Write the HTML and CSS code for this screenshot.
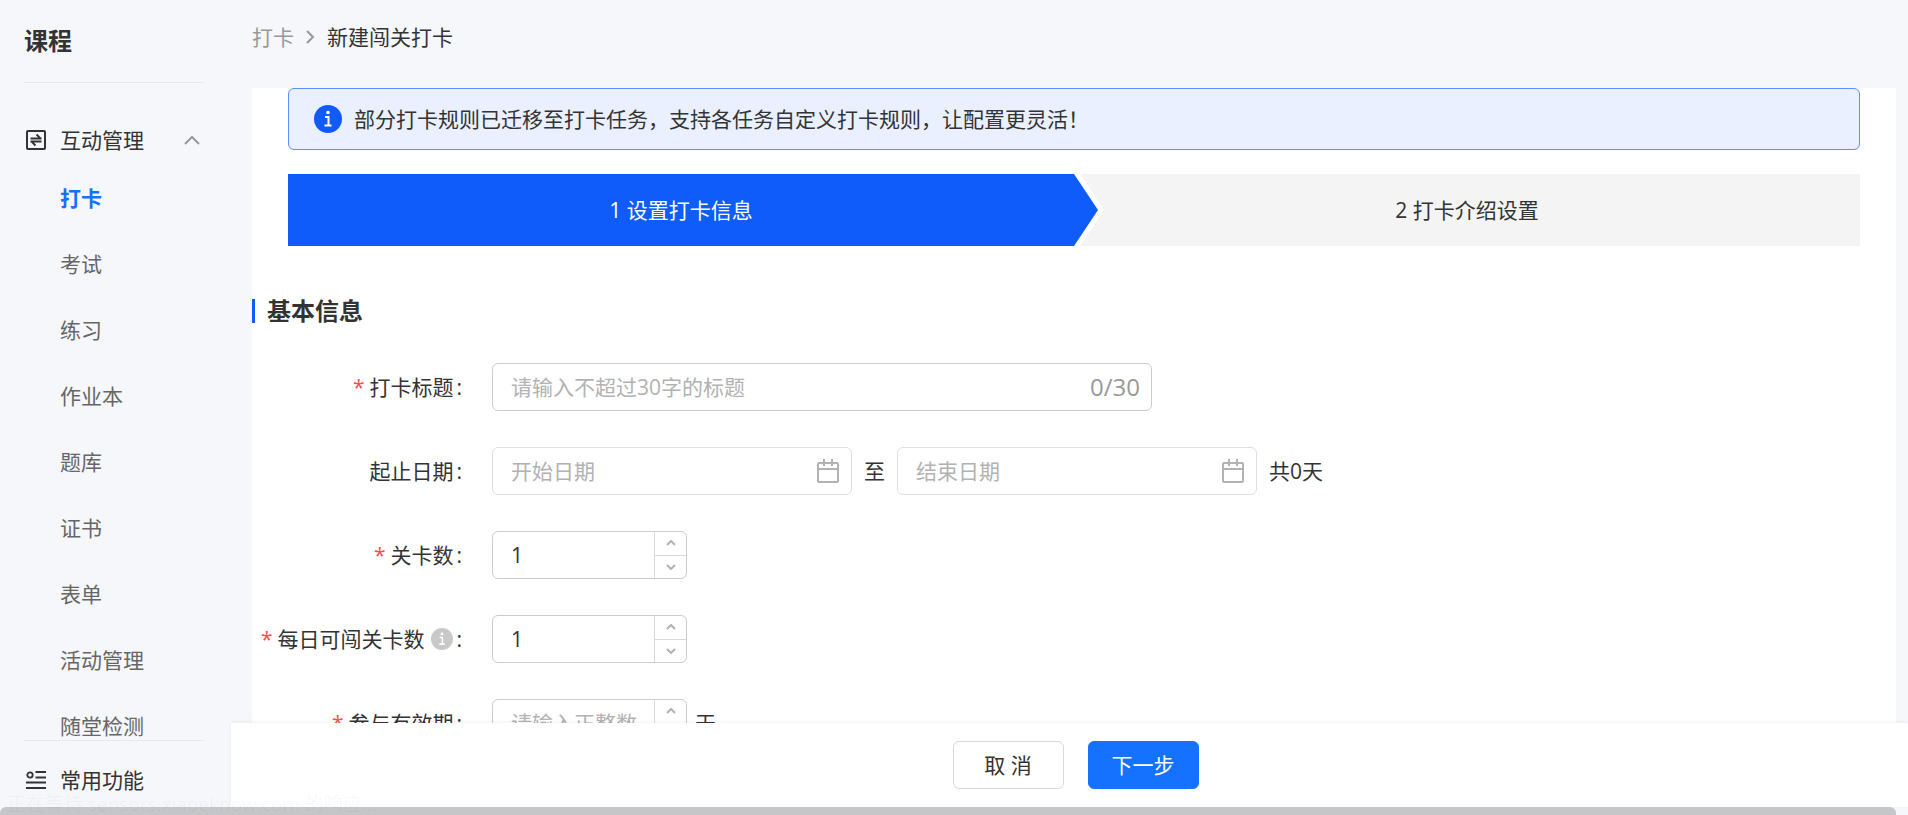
FILE: index.html
```html
<!DOCTYPE html>
<html lang="zh-CN">

<head>
  <meta charset="utf-8">
  <meta name="viewport" content="width=device-width, initial-scale=1">
  <title>新建闯关打卡</title>
  <link rel="stylesheet" href="styles.css">
</head>

<body>
  <div class="app">
    <aside class="sidebar">
      <h1 class="sidebar-title">课程</h1>
      <nav class="menu">
        <button class="menu-group" type="button">
          <svg class="menu-icon" viewBox="0 0 20 20" fill="none" stroke="currentColor" stroke-width="2">
            <rect x="1" y="1" width="18" height="18" rx="1" />
            <path d="M4.5 8.5h11M10.5 4.5l4 4M15.5 11.5h-11M9.5 15.5l-4-4" stroke-width="1.8" />
          </svg>
          <span>互动管理</span>
          <svg class="menu-arrow" viewBox="0 0 16 10" fill="none" stroke="currentColor" stroke-width="2">
            <path d="M1 9l7-7 7 7" />
          </svg>
        </button>
        <a class="menu-item active" href="#">打卡</a>
        <a class="menu-item" href="#">考试</a>
        <a class="menu-item" href="#">练习</a>
        <a class="menu-item" href="#">作业本</a>
        <a class="menu-item" href="#">题库</a>
        <a class="menu-item" href="#">证书</a>
        <a class="menu-item" href="#">表单</a>
        <a class="menu-item" href="#">活动管理</a>
        <a class="menu-item" href="#">随堂检测</a>
      </nav>
      <a class="common" href="#">
        <svg class="menu-icon" viewBox="0 0 20 20" fill="none" stroke="currentColor" stroke-width="2">
          <circle cx="4" cy="5" r="2.7" stroke-width="1.8" />
          <path d="M9.5 2H20M9.5 7.5H20M0 12.5h20M0 18h20" />
        </svg>
        <span>常用功能</span>
      </a>
    </aside>

    <main class="main">
      <div class="content">
        <div class="breadcrumb">
          <a href="#">打卡</a>
          <svg class="crumb-arrow" viewBox="0 0 9 14" fill="none" stroke="currentColor" stroke-width="2">
            <path d="M1 1l6 6-6 6" />
          </svg>
          <span>新建闯关打卡</span>
        </div>

        <div class="panel">
          <div class="notice">
            <svg class="notice-icon" viewBox="0 0 28 28">
              <circle cx="14" cy="14" r="14" fill="#105cfb" />
              <circle cx="14" cy="7.5" r="1.8" fill="#fff" />
              <path d="M11 12h3.5v8M10.5 20.5h7" fill="none" stroke="#fff" stroke-width="2" />
            </svg>
            <span>部分打卡规则已迁移至打卡任务，支持各任务自定义打卡规则，让配置更灵活！</span>
          </div>

          <div class="steps">
            <div class="step current">1 设置打卡信息</div>
            <div class="step">2 打卡介绍设置</div>
          </div>

          <h2 class="section-title">基本信息</h2>

          <form class="form" id="form">
            <div class="row">
              <label class="label required" for="title">打卡标题<i>:</i></label>
              <div class="box title-box">
                <input type="text" id="title" placeholder="请输入不超过30字的标题">
                <span class="count">0/30</span>
              </div>
            </div>
            <div class="row">
              <label class="label" for="start">起止日期<i>:</i></label>
              <div class="box date-box">
                <input type="text" id="start" placeholder="开始日期">
                <svg class="calendar" viewBox="0 0 22 24" fill="none" stroke="currentColor" stroke-width="2">
                  <rect x="1" y="4" width="20" height="19" rx="1" />
                  <path d="M1 10h20M7 0v7M15 0v7" />
                </svg>
              </div>
              <label for="end">至</label>
              <div class="box date-box">
                <input type="text" id="end" placeholder="结束日期">
                <svg class="calendar" viewBox="0 0 22 24" fill="none" stroke="currentColor" stroke-width="2">
                  <rect x="1" y="4" width="20" height="19" rx="1" />
                  <path d="M1 10h20M7 0v7M15 0v7" />
                </svg>
              </div>
              <span>共0天</span>
            </div>
            <div class="row">
              <label class="label required" for="levels">关卡数<i>:</i></label>
              <div class="box number-box">
                <input type="number" id="levels" value="1">
                <div class="stepper">
                  <button type="button" aria-label="增加"><svg viewBox="0 0 10 6"><path d="M1 5l4-4 4 4" /></svg></button>
                  <button type="button" aria-label="减少"><svg viewBox="0 0 10 6"><path d="M1 1l4 4 4-4" /></svg></button>
                </div>
              </div>
            </div>
            <div class="row">
              <label class="label required" for="daily">每日可闯关卡数
                <svg class="help" viewBox="0 0 28 28">
                  <circle cx="14" cy="14" r="14" fill="#c8c8c8" />
                  <circle cx="14" cy="7.5" r="1.8" fill="#fff" />
                  <path d="M11 12h3.5v8M10.5 20.5h7" fill="none" stroke="#fff" stroke-width="2" />
                </svg><i>:</i></label>
              <div class="box number-box">
                <input type="number" id="daily" value="1">
                <div class="stepper">
                  <button type="button" aria-label="增加"><svg viewBox="0 0 10 6"><path d="M1 5l4-4 4 4" /></svg></button>
                  <button type="button" aria-label="减少"><svg viewBox="0 0 10 6"><path d="M1 1l4 4 4-4" /></svg></button>
                </div>
              </div>
            </div>
            <div class="row">
              <label class="label required" for="valid">参与有效期<i>:</i></label>
              <div class="box number-box">
                <input type="number" id="valid" placeholder="请输入正整数">
                <div class="stepper">
                  <button type="button" aria-label="增加"><svg viewBox="0 0 10 6"><path d="M1 5l4-4 4 4" /></svg></button>
                  <button type="button" aria-label="减少"><svg viewBox="0 0 10 6"><path d="M1 1l4 4 4-4" /></svg></button>
                </div>
              </div>
              <span>天</span>
            </div>
          </form>
        </div>
      </div>

      <div class="actions">
        <button class="btn" type="button">取 消</button>
        <button class="btn btn-primary" type="submit" form="form">下一步</button>
      </div>
    </main>
  </div>
  <div class="scrollbar"></div>
  <div class="status">正在等待 sensors.xiaoeknow.com 的响应...</div>
</body>

</html>
```

FILE: styles.css
```css
* {
  box-sizing: border-box;
}

body {
  margin: 0;
  height: 100vh;
  display: flex;
  flex-direction: column;
  background: #f5f7fb;
  color: #333;
  font-family: "Open Sans", "Noto Sans CJK SC", sans-serif;
  font-size: 21px;
  line-height: 32px;
  overflow: hidden;
}

a {
  color: inherit;
  text-decoration: none;
}

button,
input {
  font: inherit;
  color: inherit;
}

svg {
  display: block;
  flex: none;
}

.app {
  flex: 1;
  min-height: 0;
  display: flex;
}

/* sidebar */
.sidebar {
  flex: none;
  width: 231px;
  padding: 0 27px 0 24px;
  display: flex;
  flex-direction: column;
}

.sidebar-title {
  margin: 0;
  height: 83px;
  flex: none;
  border-bottom: 1px solid #e9e9eb;
  font-size: 24px;
  line-height: 82px;
}

.menu {
  flex: 1;
  min-height: 0;
  padding-top: 32px;
  overflow-y: auto;
  scrollbar-width: none;
}

.menu-group {
  width: 100%;
  height: 50px;
  padding: 0 4px 0 2px;
  border: none;
  background: none;
  display: flex;
  align-items: center;
  gap: 14px;
  cursor: pointer;
}

.menu-icon {
  width: 20px;
  height: 20px;
}

.menu-arrow {
  width: 16px;
  height: 10px;
  margin-left: auto;
  color: #999;
}

.menu-item {
  display: block;
  padding-left: 36px;
  line-height: 66px;
  color: #666;
}

.menu-item.active {
  color: #1472ff;
  font-weight: bold;
}

.common {
  flex: none;
  height: 67px;
  padding: 12px 2px 0;
  border-top: 1px solid #e9e9eb;
  display: flex;
  align-items: center;
  gap: 14px;
}

/* main area */
.main {
  flex: 1;
  min-width: 0;
  display: flex;
  flex-direction: column;
}

.content {
  flex: 1;
  min-height: 0;
  padding: 0 12px 0 21px;
  overflow-y: auto;
  scrollbar-width: none;
}

.breadcrumb {
  height: 88px;
  padding-bottom: 14px;
  display: flex;
  align-items: center;
  gap: 12px;
}

.breadcrumb a,
.crumb-arrow {
  color: #999;
}

.crumb-arrow {
  width: 9px;
  height: 14px;
}

.panel {
  background: #fff;
  padding-bottom: 36px;
}

.notice {
  margin: 0 36px 24px;
  height: 62px;
  padding: 0 25px;
  border: 1px solid #5b8ffc;
  border-radius: 6px;
  background: #eaf0ff;
  display: flex;
  align-items: center;
  gap: 12px;
}

.notice-icon {
  width: 28px;
  height: 28px;
}

.steps {
  margin: 0 36px;
  display: flex;
  background: #f4f4f4;
}

.step {
  flex: 1;
  height: 72px;
  line-height: 72px;
  text-align: center;
}

.step.current {
  position: relative;
  background: #105cfb;
  color: #fff;
}

/* white edge and blue tip of the arrow, over the next step */
.step.current::before,
.step.current::after {
  content: "";
  position: absolute;
  top: 0;
  left: 100%;
  width: 30px;
  height: 100%;
  background: #fff;
  clip-path: polygon(0 0, 6px 0, 100% 50%, 6px 100%, 0 100%);
}

.step.current::after {
  width: 24px;
  background: #105cfb;
  clip-path: polygon(0 0, 100% 50%, 0 100%);
}

.section-title {
  margin: 53px 0 40px;
  padding-left: 12px;
  border-left: 3px solid #105cfb;
  font-size: 24px;
  line-height: 24px;
}

/* form */
.form {
  display: flex;
  flex-direction: column;
  gap: 36px;
}

.row {
  display: flex;
  align-items: center;
  gap: 12px;
}

.label {
  flex: none;
  width: 228px;
  padding-right: 18px;
  display: flex;
  align-items: center;
  justify-content: flex-end;
}

.label i {
  margin-left: 3px;
  font-style: normal;
}

.label.required::before {
  content: "*";
  margin-right: 5px;
  color: #ff4d4f;
}

.help {
  width: 22px;
  height: 22px;
  margin-left: 7px;
}

.box {
  height: 48px;
  border: 1px solid #ccc;
  border-radius: 6px;
  background: #fff;
  display: flex;
  align-items: center;
}

.box input {
  flex: 1;
  min-width: 0;
  height: 100%;
  padding: 0 0 0 18px;
  border: none;
  outline: none;
  background: none;
  appearance: textfield;
}

.box input::-webkit-inner-spin-button {
  appearance: none;
}

.box input::placeholder {
  color: #b2b2b2;
}

.title-box {
  width: 660px;
}

.count {
  padding-right: 11px;
  color: #999;
  font-size: 24px;
}

.date-box {
  width: 360px;
  padding-right: 12px;
  border-color: #e0e0e0;
}

.calendar {
  width: 22px;
  height: 24px;
  color: #b2b2b2;
}

.number-box {
  width: 195px;
}

.number-box + span {
  margin-left: -4px;
}

.stepper {
  width: 32px;
  height: 100%;
  border-left: 1px solid #d9d9d9;
  display: flex;
  flex-direction: column;
}

.stepper button {
  flex: 1;
  padding: 0;
  border: none;
  background: none;
  display: flex;
  align-items: center;
  justify-content: center;
  cursor: pointer;
}

.stepper button + button {
  border-top: 1px solid #d9d9d9;
}

.stepper svg {
  width: 10px;
  height: 6px;
  fill: none;
  stroke: #b2b2b2;
  stroke-width: 2;
}

/* bottom bar */
.actions {
  flex: none;
  height: 84px;
  padding-left: 12px;
  background: #fff;
  box-shadow: 0 -1px 4px rgba(0, 0, 0, 0.06);
  display: flex;
  align-items: center;
  justify-content: center;
  gap: 24px;
}

.btn {
  width: 111px;
  height: 48px;
  padding: 0;
  border: 1px solid #d9d9d9;
  border-radius: 6px;
  background: #fff;
  cursor: pointer;
}

.btn-primary {
  border-color: #1472ff;
  background: #1472ff;
  color: #fff;
}

.scrollbar {
  flex: none;
  height: 8px;
  margin-right: 12px;
  border-radius: 6px 6px 0 0;
  background: #c5c6c8;
}

/* fading browser status text over the page */
.status {
  position: absolute;
  left: 0;
  bottom: 0;
  padding-left: 7px;
  font-size: 19px;
  line-height: 22px;
  color: rgba(0, 0, 0, 0.04);
  pointer-events: none;
}
```
